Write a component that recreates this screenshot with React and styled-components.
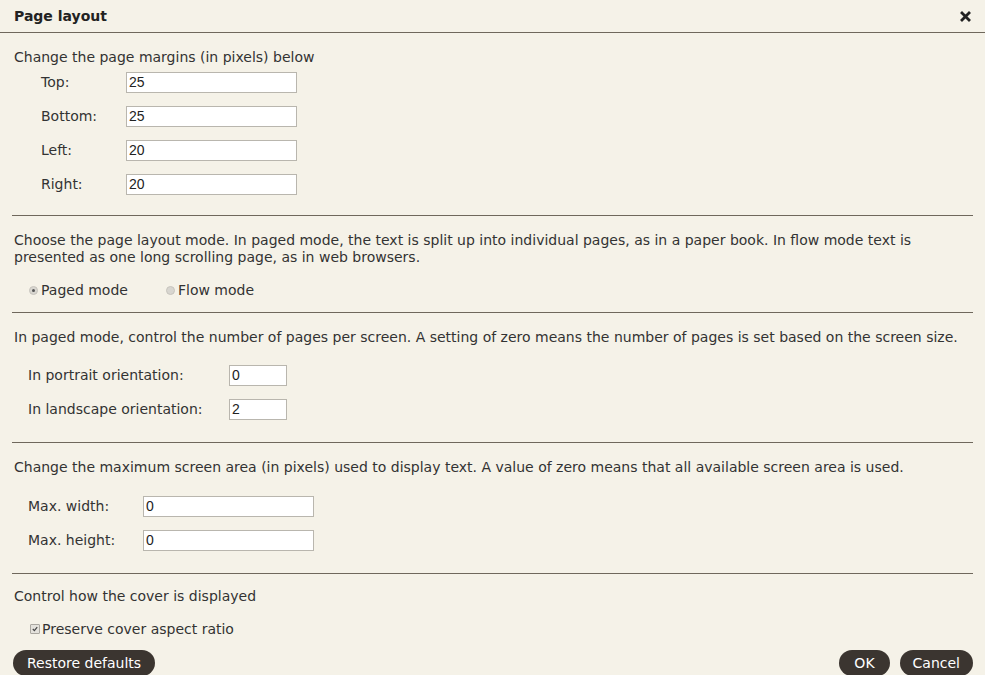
import styled, { createGlobalStyle } from "styled-components";

const GlobalStyle = createGlobalStyle`
  html, body {
    margin: 0;
    padding: 0;
    background-color: #f5f2e8;
  }
  body {
    font-family: "DejaVu Sans", Verdana, sans-serif;
    color: #333;
  }
`;

const Dialog = styled.div`
  width: 985px;
  height: 675px;
  background-color: #f5f2e8;
  display: flex;
  flex-direction: column;
  overflow: hidden;
  font-size: 14px;
`;

const Header = styled.div`
  height: 32px;
  border-bottom: 1px solid #6f685c;
  display: flex;
  align-items: center;
  justify-content: space-between;
  padding: 0 14px;
`;

const Title = styled.h1`
  margin: 0;
  font-size: 14px;
  font-weight: bold;
  color: #222;
`;

const CloseButton = styled.button`
  border: none;
  background: none;
  padding: 0;
  display: flex;
  cursor: pointer;
`;

const Section = styled.section`
  margin: 0 12px;
  padding: ${(p) => p.$pad};
  border-bottom: ${(p) => (p.$last ? "none" : "1px solid #6f685c")};
`;

const Text = styled.p`
  margin: 0 2px;
  line-height: 17px;
`;

const Rows = styled.div`
  margin-top: ${(p) => p.$top}px;
  padding-left: ${(p) => p.$indent}px;
`;

const Row = styled.div`
  height: 34px;
  display: flex;
  align-items: center;
`;

const Label = styled.label`
  width: ${(p) => p.$w}px;
`;

const Field = styled.input`
  box-sizing: border-box;
  width: ${(p) => p.$w}px;
  height: 21px;
  border: 1px solid #b9b6ae;
  background: #fff;
  font-family: "Liberation Sans", Arial, sans-serif;
  font-size: 14px;
  color: #222;
  padding: 0 2px;
  outline: none;
`;

const OptionRow = styled.div`
  height: 24px;
  margin-top: ${(p) => p.$top}px;
  padding-left: ${(p) => p.$indent}px;
  display: flex;
  align-items: center;
  gap: 38px;
`;

const Option = styled.label`
  display: flex;
  align-items: center;
  gap: ${(p) => p.$gap || 3}px;
`;

const Radio = styled.span`
  width: 7px;
  height: 7px;
  border-radius: 50%;
  background: #d8d6d0;
  border: 1px solid #c7c4bd;
  display: flex;
  align-items: center;
  justify-content: center;
  &::after {
    content: "";
    width: 3px;
    height: 3px;
    border-radius: 50%;
    background: ${(p) => (p.$on ? "#555" : "transparent")};
  }
`;

const Check = styled.span`
  width: 8px;
  height: 8px;
  border: 1px solid #aaa7a0;
  background: #e4e2dc;
  border-radius: 1px;
  display: flex;
  align-items: center;
  justify-content: center;
`;

const Footer = styled.div`
  margin-top: auto;
  padding: 0 12px 0 13px;
  height: 26px;
  display: flex;
  justify-content: space-between;
  transform: translateY(1px);
`;

const Group = styled.div`
  display: flex;
  gap: 10px;
`;

const Button = styled.button`
  background-color: #3b3530;
  color: #fff;
  border: none;
  border-radius: 13px;
  height: 26px;
  padding: 0 ${(p) => p.$px || 13}px;
  font-family: "DejaVu Sans", Verdana, sans-serif;
  font-size: 14px;
  cursor: pointer;
`;

function CloseIcon() {
  return (
    <svg width="11" height="11" viewBox="0 0 11 11">
      <path d="M2 2 L9 9 M9 2 L2 9" stroke="#222" strokeWidth="2.8" strokeLinecap="square" />
    </svg>
  );
}

export default function App() {
  return (
    <>
      <GlobalStyle />
      <Dialog>
        <Header>
          <Title>Page layout</Title>
          <CloseButton aria-label="Close">
            <CloseIcon />
          </CloseButton>
        </Header>

        <Section $pad="16px 0 14px">
          <Text>Change the page margins (in pixels) below</Text>
          <Rows $top={-1} $indent={29}>
            <Row><Label $w={85}>Top:</Label><Field $w={171} defaultValue="25" /></Row>
            <Row><Label $w={85}>Bottom:</Label><Field $w={171} defaultValue="25" /></Row>
            <Row><Label $w={85}>Left:</Label><Field $w={171} defaultValue="20" /></Row>
            <Row><Label $w={85}>Right:</Label><Field $w={171} defaultValue="20" /></Row>
          </Rows>
        </Section>

        <Section $pad="16px 0 10px">
          <Text>
            Choose the page layout mode. In paged mode, the text is split up into individual pages, as in a paper book. In flow mode text is presented as one long scrolling page, as in web browsers.
          </Text>
          <OptionRow $top={12} $indent={17}>
            <Option><Radio $on />Paged mode</Option>
            <Option><Radio />Flow mode</Option>
          </OptionRow>
        </Section>

        <Section $pad="16px 0 16px">
          <Text>
            In paged mode, control the number of pages per screen. A setting of zero means the number of pages is set based on the screen size.
          </Text>
          <Rows $top={12} $indent={16}>
            <Row><Label $w={201}>In portrait orientation:</Label><Field $w={58} defaultValue="0" /></Row>
            <Row><Label $w={201}>In landscape orientation:</Label><Field $w={58} defaultValue="2" /></Row>
          </Rows>
        </Section>

        <Section $pad="16px 0 16px">
          <Text>
            Change the maximum screen area (in pixels) used to display text. A value of zero means that all available screen area is used.
          </Text>
          <Rows $top={13} $indent={16}>
            <Row><Label $w={115}>Max. width:</Label><Field $w={171} defaultValue="0" /></Row>
            <Row><Label $w={115}>Max. height:</Label><Field $w={171} defaultValue="0" /></Row>
          </Rows>
        </Section>

        <Section $pad="14px 0 0" $last>
          <Text>Control how the cover is displayed</Text>
          <OptionRow $top={12} $indent={18}>
            <Option $gap={2}>
              <Check>
                <svg width="6" height="6" viewBox="0 0 6 6">
                  <path d="M0.8 3 L2.4 4.6 L5.2 1.2" stroke="#444" strokeWidth="1.2" fill="none" />
                </svg>
              </Check>
              Preserve cover aspect ratio
            </Option>
          </OptionRow>
        </Section>

        <Footer>
          <Button $px={14}>Restore defaults</Button>
          <Group>
            <Button $px={15}>OK</Button>
            <Button $px={13}>Cancel</Button>
          </Group>
        </Footer>
      </Dialog>
    </>
  );
}
